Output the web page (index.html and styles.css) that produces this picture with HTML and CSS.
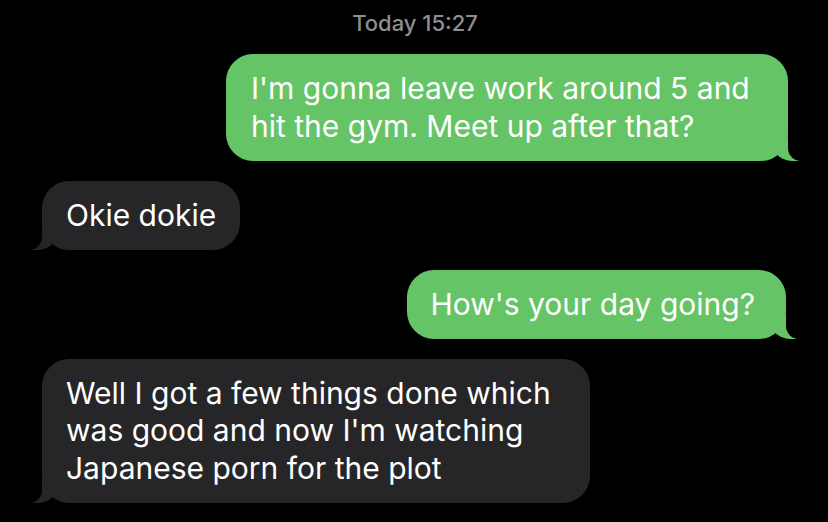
FILE: index.html
```html
<!DOCTYPE html>
<html lang="en">
<head>
<meta charset="utf-8">
<title>Messages</title>
<link rel="stylesheet" href="styles.css">
</head>
<body>
<main class="thread">
  <div class="stamp">Today 15:27</div>
  <div class="row row-sent">
    <p class="bubble sent b1">I'm gonna leave work around 5 and hit the gym. Meet up after that?</p>
  </div>
  <div class="row row-recv">
    <p class="bubble recv">Okie dokie</p>
  </div>
  <div class="row row-sent">
    <p class="bubble sent b3">How's your day going?</p>
  </div>
  <div class="row row-recv">
    <p class="bubble recv b4">Well I got a few things done which was good and now I'm watching Japanese porn for the plot</p>
  </div>
</main>
</body>
</html>
```
FILE: styles.css
```css
html, body {
  margin: 0;
  background: #000;
}
body {
  width: 828px;
  height: 522px;
  overflow: hidden;
  font-family: "Inter", "Noto Sans", sans-serif;
  color: #fff;
}
.thread {
  display: flex;
  flex-direction: column;
  gap: 19.5px;
  padding: 10px 40px 0 42px;
}
.stamp {
  text-align: center;
  color: #8e8e93;
  font-size: 22px;
  font-weight: 500;
  line-height: 26px;
  margin-bottom: -1.5px;
}
.row {
  display: flex;
}
.row-sent { justify-content: flex-end; }
.row-recv { justify-content: flex-start; }
.bubble {
  position: relative;
  margin: 0;
  padding: 16px 24px 16px 24px;
  font-size: 30px;
  line-height: 37.5px;
  border-radius: 27px;
}
.sent { background: #65c466; padding-left: 25px; padding-right: 25px; }
.recv { background: #262628; }
.b1 { max-width: 512px; }
.b3 { padding-left: 24px; padding-right: 31px; margin-right: 2px; }
.b4 { max-width: 500px; }
.sent::before {
  content: "";
  position: absolute;
  bottom: 0;
  right: -11px;
  width: 26px;
  height: 24px;
  background: #65c466;
  border-bottom-left-radius: 20px 16px;
}
.sent::after {
  content: "";
  position: absolute;
  bottom: 0;
  right: -28px;
  width: 28px;
  height: 26px;
  background: #000;
  border-bottom-left-radius: 13px;
}
.recv::before {
  content: "";
  position: absolute;
  bottom: 0;
  left: -13px;
  width: 28px;
  height: 24px;
  background: #262628;
  border-bottom-right-radius: 20px 16px;
}
.recv::after {
  content: "";
  position: absolute;
  bottom: 0;
  left: -30px;
  width: 30px;
  height: 26px;
  background: #000;
  border-bottom-right-radius: 13px;
}
```
